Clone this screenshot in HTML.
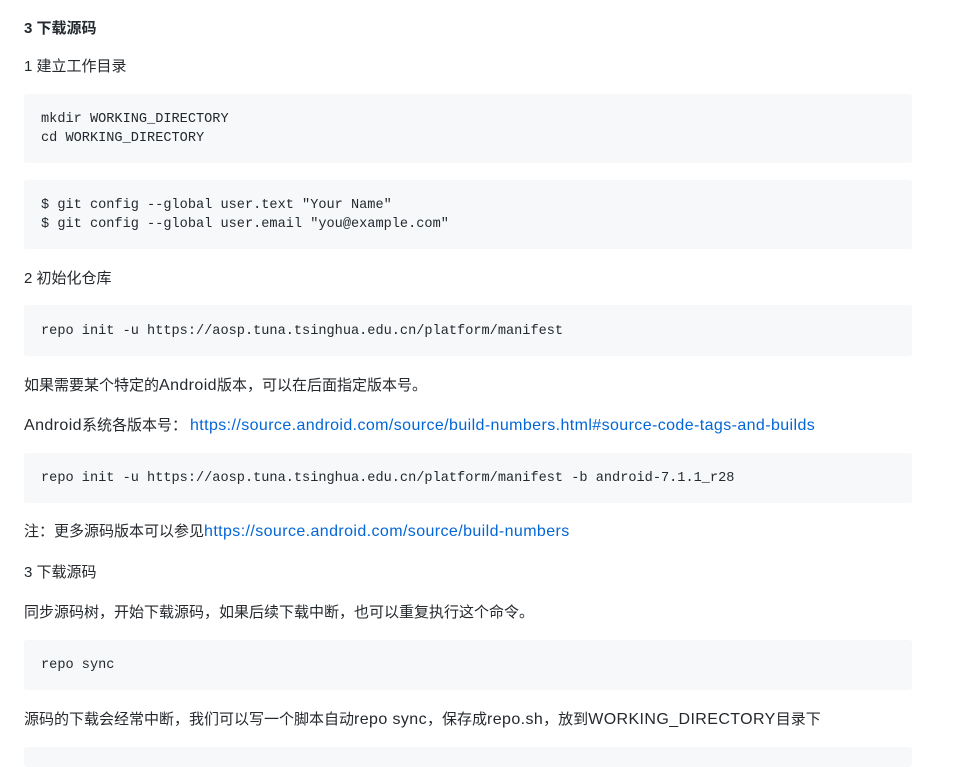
<!DOCTYPE html>
<html><head><meta charset="utf-8"><style>
body{margin:0;background:#fff;width:955px;height:756px;overflow:hidden;position:relative;font-family:"Liberation Sans","Noto Sans CJK SC",sans-serif;color:#24292e;font-size:15px}
.t{position:absolute;left:24px;line-height:20px;white-space:nowrap}
.l{font-size:16px;letter-spacing:0.4px;line-height:20px}
.b{position:absolute;left:24px;width:888px;background:#f6f8fa;border-radius:3px}
.c{position:absolute;left:41px;font-family:"Liberation Mono","DejaVu Sans Mono",monospace;font-size:13.6px;line-height:19px;white-space:pre;color:#24292e}
a{color:#0366d6;text-decoration:none}
</style></head><body>
<div class="t" style="top:19px;font-weight:bold">3 下载源码</div>
<div class="t" style="top:57px">1 建立工作目录</div>
<div class="b" style="top:94px;height:69px"></div>
<div class="c" style="top:110px">mkdir WORKING_DIRECTORY
cd WORKING_DIRECTORY</div>
<div class="b" style="top:180px;height:69px"></div>
<div class="c" style="top:196px">$ git config --global user.text "Your Name"
$ git config --global user.email "you@example.com"</div>
<div class="t" style="top:269px">2 初始化仓库</div>
<div class="b" style="top:305px;height:51px"></div>
<div class="c" style="top:322px">repo init -u https://aosp.tuna.tsinghua.edu.cn/platform/manifest</div>
<div class="t" style="top:376px">如果需要某个特定的<span class="l">Android</span>版本，可以在后面指定版本号。</div>
<div class="t" style="top:416px"><span class="l">Android</span>系统各版本号：<a class="l" style="margin-left:3px">https://source.android.com/source/build-numbers.html#source-code-tags-and-builds</a></div>
<div class="b" style="top:453px;height:50px"></div>
<div class="c" style="top:469px">repo init -u https://aosp.tuna.tsinghua.edu.cn/platform/manifest -b android-7.1.1_r28</div>
<div class="t" style="top:522px">注：更多源码版本可以参见<a class="l">https://source.android.com/source/build-numbers</a></div>
<div class="t" style="top:563px">3 下载源码</div>
<div class="t" style="top:603px">同步源码树，开始下载源码，如果后续下载中断，也可以重复执行这个命令。</div>
<div class="b" style="top:640px;height:50px"></div>
<div class="c" style="top:656px">repo sync</div>
<div class="t" style="top:710px">源码的下载会经常中断，我们可以写一个脚本自动<span class="l">repo sync</span>，保存成<span class="l">repo.sh</span>，放到<span class="l">WORKING_DIRECTORY</span>目录下</div>
<div class="b" style="top:747px;height:20px"></div>
</body></html>
